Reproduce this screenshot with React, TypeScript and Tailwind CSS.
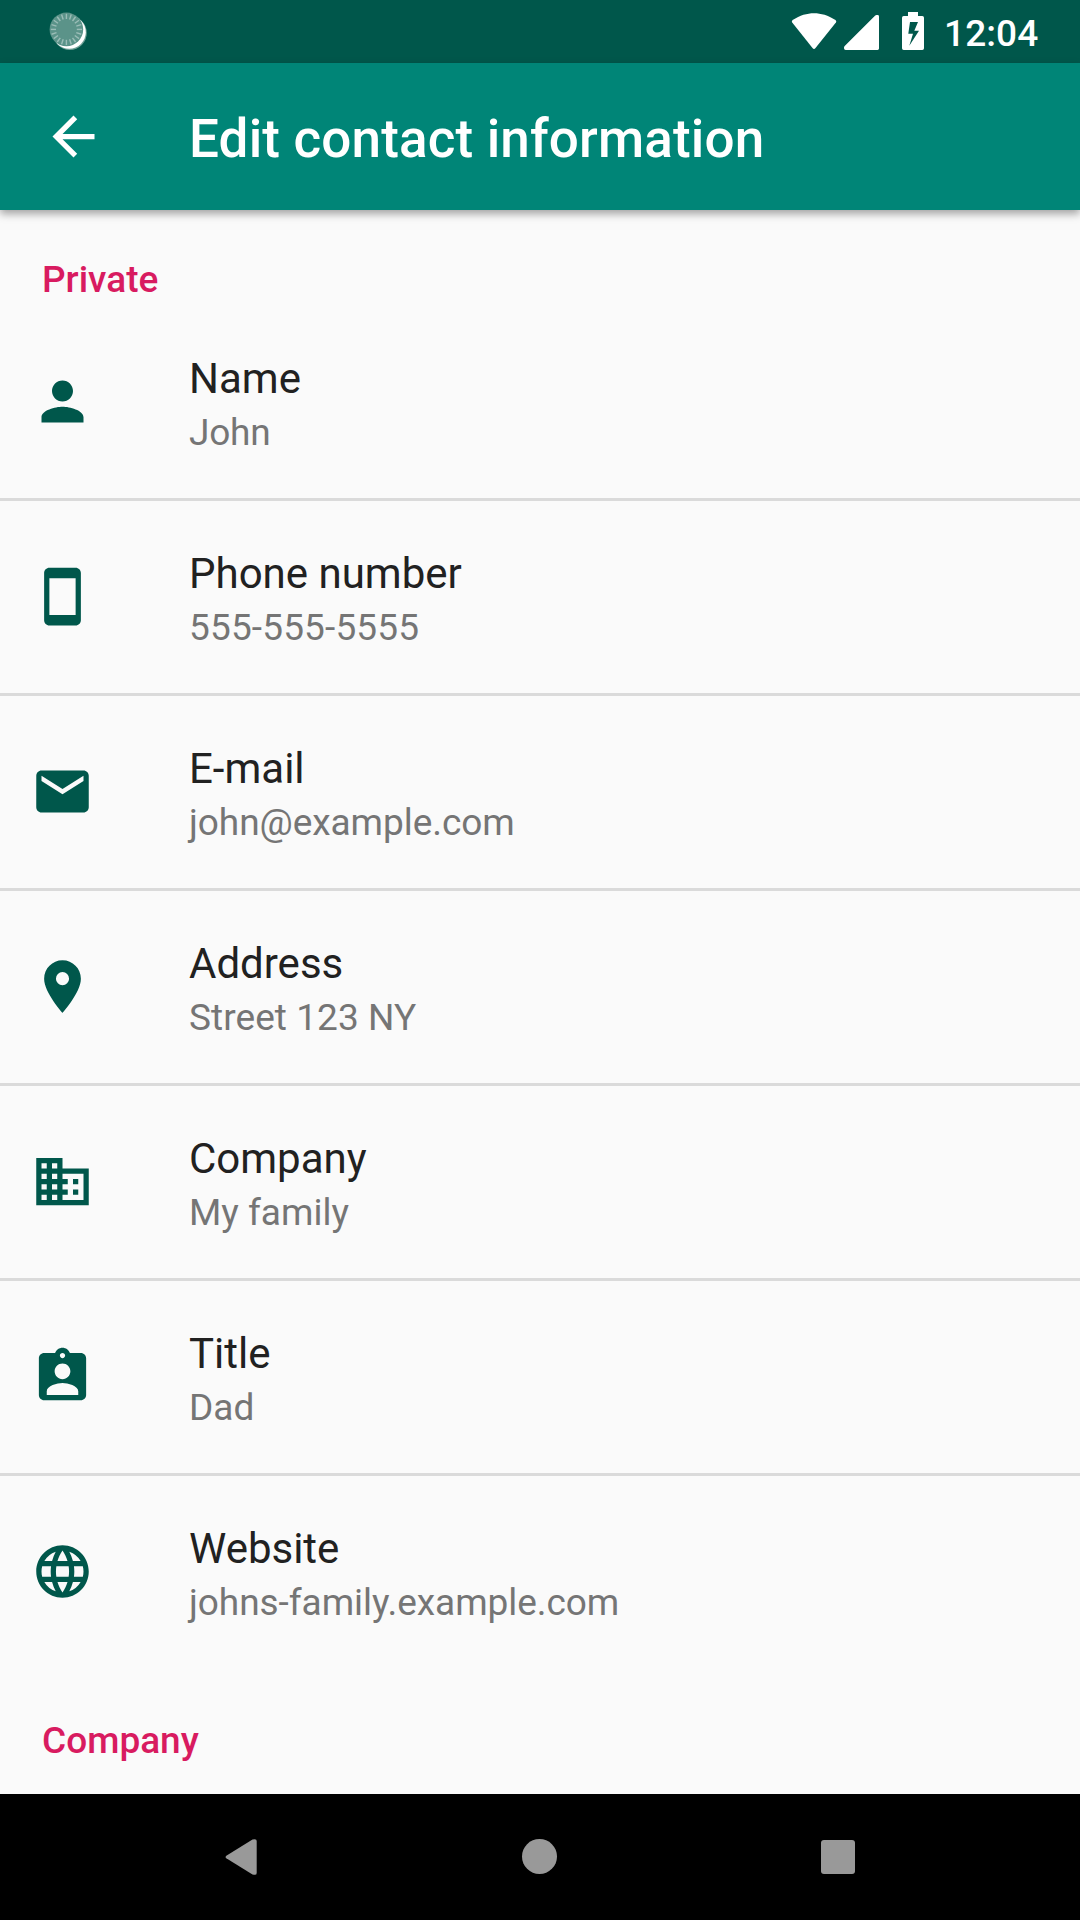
import type { IconType } from "react-icons";
import {
  MdArrowBack,
  MdAssignmentInd,
  MdBusiness,
  MdEmail,
  MdLanguage,
  MdPerson,
  MdPlace,
  MdSmartphone,
} from "react-icons/md";

type Field = { icon: IconType; label: string; value: string; spacing?: string };

const fields: Field[] = [
  { icon: MdPerson, label: "Name", value: "John", spacing: "tracking-[-0.2px]" },
  { icon: MdSmartphone, label: "Phone number", value: "555-555-5555", spacing: "tracking-[0.15px]" },
  { icon: MdEmail, label: "E-mail", value: "john@example.com", spacing: "tracking-[-0.06px]" },
  { icon: MdPlace, label: "Address", value: "Street 123 NY", spacing: "tracking-[0.06px]" },
  { icon: MdBusiness, label: "Company", value: "My family" },
  { icon: MdAssignmentInd, label: "Title", value: "Dad" },
  { icon: MdLanguage, label: "Website", value: "johns-family.example.com", spacing: "tracking-[-0.05px]" },
];

const ticks = Array.from({ length: 20 }, (_, i) => i * 18);

function SyncIndicator() {
  return (
    <svg className="ml-[48px] mt-[10px] size-[42px]" viewBox="48 10 42 42">
      <circle cx="69.8" cy="33.1" r="17" fill="#6fa197" />
      <circle cx="69.2" cy="32.2" r="16.6" fill="#fff" />
      <circle cx="66.4" cy="29.4" r="16.8" fill="#5b9389" />
      {ticks.map((angle) => (
        <line
          key={angle}
          x1="66.4"
          y1="13.8"
          x2="66.4"
          y2="19"
          stroke="#9bbdb7"
          strokeWidth="1.4"
          transform={`rotate(${angle} 66.4 29.4)`}
        />
      ))}
    </svg>
  );
}

function StatusBar() {
  return (
    <div className="flex h-[63px] shrink-0 items-start justify-between bg-[#00574b] text-white">
      <SyncIndicator />
      <div className="flex items-start">
        <svg className="h-[63px] w-[145px]" viewBox="787 0 145 63" fill="currentColor">
          <path d="M792.2 22.6Q791.2 21.2 792.6 20.1C800 15.200 807 13.200 814 13.200S828 15.200 835.500 20.100Q836.900 21.200 835.900 22.600L815.500 48Q814 49.800 812.500 48Z" />
          <path d="M844 48.300V47.700Q844 46.800 844.700 46.100L875 15.700Q875.700 15 876.500 15H877.600Q879 15 879 16.400V48.600Q879 50 877.600 50H845.700Q844 50 844 48.300Z" />
          <path
            fillRule="evenodd"
            d="M908 12H918V16H922.300Q924 16 924 17.700V48.300Q924 50 922.300 50H903.700Q902 50 902 48.300V17.700Q902 16 903.700 16H908ZM910 22L908.300 33.800H913L909.300 45.800L919 30.700H914.300L918 22Z"
          />
        </svg>
        <span className="ml-[12px] mt-[12px] w-[136px] text-[37px] leading-[43px] font-medium tracking-[0.1px]">
          12:04
        </span>
      </div>
    </div>
  );
}

function Toolbar() {
  return (
    <header className="relative flex h-[147px] shrink-0 items-center bg-[#008577] pl-[42px] text-white shadow-[0_4px_8px_rgba(0,0,0,0.35)]">
      <MdArrowBack className="size-[63px]" />
      <h1 className="ml-[84px] mt-[4px] text-[53px] leading-[62px] font-medium tracking-[0.16px]">
        Edit contact information
      </h1>
    </header>
  );
}

function SectionTitle({ children }: { children: string }) {
  return (
    <h2 className="h-[96px] pl-[42px] pt-[48px] text-[37px] leading-[43px] font-medium text-[#d81b60]">
      {children}
    </h2>
  );
}

function FieldRow({ icon: Icon, label, value, spacing = "" }: Field) {
  return (
    <li className="flex h-[195px] border-b-[3px] border-[#dadada] pl-[31px] last:border-transparent">
      <Icon className="mt-[64px] size-[63px] shrink-0 text-[#00574b]" />
      <div className="ml-[95px] pt-[44px]">
        <div className="text-[42px] leading-[58px] text-[#212121]">{label}</div>
        <div className={`text-[37px] leading-[50px] text-[#757575] ${spacing}`}>{value}</div>
      </div>
    </li>
  );
}

function NavigationBar() {
  return (
    <nav className="flex h-[126px] shrink-0 items-center bg-black text-[#999999]">
      <svg className="ml-[225px] size-[36px]" viewBox="225 1839 36 36" fill="currentColor">
        <path d="M226.300 1855.700L252.500 1839.600Q256.700 1838.200 256.700 1841V1873Q256.700 1875.800 252.500 1874.400L226.300 1858.300Q224.800 1857 226.300 1855.700Z" />
      </svg>
      <div className="ml-[261px] mb-[1px] size-[35px] rounded-full bg-[#999999]" />
      <div className="ml-[264px] size-[34px] rounded-[3px] bg-[#999999]" />
    </nav>
  );
}

export default function App() {
  return (
    <div className="flex h-[1920px] w-[1080px] flex-col overflow-hidden bg-[#fafafa] font-[Roboto,sans-serif]">
      <StatusBar />
      <Toolbar />
      <main className="min-h-0 flex-1 overflow-hidden">
        <SectionTitle>Private</SectionTitle>
        <ul>
          {fields.map((field) => (
            <FieldRow key={field.label} {...field} />
          ))}
        </ul>
        <SectionTitle>Company</SectionTitle>
      </main>
      <NavigationBar />
    </div>
  );
}
